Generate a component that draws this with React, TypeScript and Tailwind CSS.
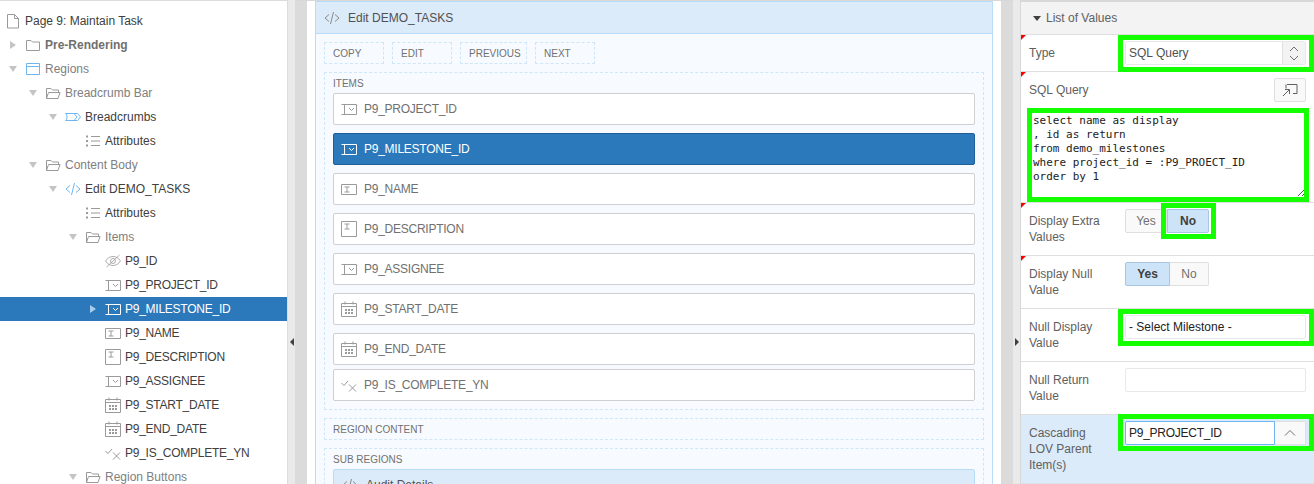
import type { ReactNode } from "react";

type IconName = "page" | "folder" | "folderOpen" | "region" | "crumb" | "list" | "code" | "hidden" | "select" | "text" | "textarea" | "date" | "check";

function Icon({ name, className = "text-[#9a9a9a]" }: { name: IconName; className?: string }) {
  const common = { fill: "none", stroke: "currentColor", strokeWidth: 1 };
  return (
    <svg width="16" height="16" viewBox="0 0 16 16" className={`shrink-0 ${className}`} {...common}>
      {name === "page" && <path d="M2.5 1.5h7l4 4v9.500h-11zM9.500 1.500v4h4" />}
      {name === "folder" && <path d="M1.500 13.500v-10h4.500l1.500 1.500h7v8.500z" />}
      {name === "folderOpen" && <path d="M1.500 13.500v-10h4.500l1.500 1.500h6v2M1.500 13.500l2-6h11.500l-2 6z" />}
      {name === "region" && <path d="M1.500 2.500h13v11h-13zM1.500 5.500h13" />}
      {name === "crumb" && <path d="M.5 4.500h8.500l3 3.500-3 3.500h-8.500c2-1.500 2-5.500 0-7zM9 4.500h3.500l3 3.500-3 3.500h-3.500" />}
      {name === "list" && (
        <>
          <path d="M6 3.500h9M6 8h9M6 12.500h9" />
          <path d="M1 3.500h2M1 8h2M1 12.500h2" strokeWidth="2" />
        </>
      )}
      {name === "code" && <path d="M5 4.500l-4 3.500 4 3.500M11 4.500l4 3.500-4 3.500M9.500 2l-3 12" />}
      {name === "hidden" && <path d="M.5 8c2-3 4.500-4.500 7.500-4.500s5.500 1.500 7.500 4.500c-2 3-4.500 4.500-7.500 4.500s-5.500-1.500-7.500-4.500zM5.500 8a2.500 2.500 0 1 0 5 0a2.500 2.500 0 1 0-5 0M1.500 14l13-12" strokeWidth=".8" />}
      {name === "select" && <path d="M.5 3.500h6M.5 13.500h6M3.500 3.500v10M5.500 3.500h10v10h-10M8 7l2.500 2.500 2.500-2.500" />}
      {name === "text" && <path d="M.5 3.500h15v10h-15zM3.500 6h5M3.500 11h5M6 6v5" />}
      {name === "textarea" && <path d="M.5 .5h15v15h-15zM3.500 3h5M3.500 8h5M6 3v5" />}
      {name === "date" && (
        <>
          <path d="M.5 2.500h15v13h-15zM.5 5.500h15M4 .5v3M12 .5v3" />
          <path d="M4 8h2v2h-2zM7 8h2v2h-2zM10 8h2v2h-2zM4 11h2v2h-2zM7 11h2v2h-2zM10 11h2v2h-2z" fill="currentColor" stroke="none" />
        </>
      )}
      {name === "check" && <path d="M.5 6l2.500 2.500 4-4.500M8 7.500l7 7M15 7.500l-7 7" />}
    </svg>
  );
}

const TREE: { label: string; level: number; icon: IconName; blue?: boolean; toggle?: "open" | "closed"; tone?: "dim" | "bold"; selected?: boolean }[] = [
  { label: "Page 9: Maintain Task", level: 0, icon: "page" },
  { label: "Pre-Rendering", level: 1, icon: "folder", toggle: "closed", tone: "bold" },
  { label: "Regions", level: 1, icon: "region", blue: true, toggle: "open", tone: "dim" },
  { label: "Breadcrumb Bar", level: 2, icon: "folderOpen", toggle: "open", tone: "dim" },
  { label: "Breadcrumbs", level: 3, icon: "crumb", blue: true, toggle: "open" },
  { label: "Attributes", level: 4, icon: "list" },
  { label: "Content Body", level: 2, icon: "folderOpen", toggle: "open", tone: "dim" },
  { label: "Edit DEMO_TASKS", level: 3, icon: "code", blue: true, toggle: "open" },
  { label: "Attributes", level: 4, icon: "list" },
  { label: "Items", level: 3.5, icon: "folderOpen", toggle: "open", tone: "dim" },
  { label: "P9_ID", level: 5, icon: "hidden" },
  { label: "P9_PROJECT_ID", level: 5, icon: "select" },
  { label: "P9_MILESTONE_ID", level: 5, icon: "select", toggle: "closed", selected: true },
  { label: "P9_NAME", level: 5, icon: "text" },
  { label: "P9_DESCRIPTION", level: 5, icon: "textarea" },
  { label: "P9_ASSIGNEE", level: 5, icon: "select" },
  { label: "P9_START_DATE", level: 5, icon: "date" },
  { label: "P9_END_DATE", level: 5, icon: "date" },
  { label: "P9_IS_COMPLETE_YN", level: 5, icon: "check" },
  { label: "Region Buttons", level: 3.5, icon: "folderOpen", toggle: "open", tone: "dim" },
];

const LEVEL_PAD: Record<number, string> = {
  0: "pl-[5px]",
  1: "pl-[25px]",
  2: "pl-[45px]",
  3: "pl-[65px]",
  3.5: "pl-[85px]",
  4: "pl-[85px]",
  5: "pl-[105px]",
};

function TreeRow({ row }: { row: (typeof TREE)[number] }) {
  const tone = row.selected ? "text-white" : row.tone === "dim" ? "text-[#808080]" : row.tone === "bold" ? "font-bold text-[#707070]" : "text-[#404040]";
  const narrow = row.label.startsWith("P9_") ? "tracking-[-.25px]" : "";
  return (
    <div className={`flex h-6 items-center gap-1 ${LEVEL_PAD[row.level]} ${row.selected ? "bg-[#2b78bb]" : ""}`}>
      {row.toggle && (
        <span className="-ml-[20px] flex w-[16px] justify-center">
          {row.toggle === "open" ? (
            <span className="border-x-[4px] border-t-[6px] border-x-transparent border-t-[#c4c4c4]" />
          ) : (
            <span className={`border-y-[4px] border-l-[6px] border-y-transparent ${row.selected ? "border-l-[#a8cdec]" : "border-l-[#c4c4c4]"}`} />
          )}
        </span>
      )}
      <Icon name={row.icon} className={row.selected ? "text-white" : row.blue ? "text-[#6db6f2]" : "text-[#9a9a9a]"} />
      <span className={`text-[12px] ${narrow} ${tone}`}>{row.label}</span>
    </div>
  );
}

const ITEMS: { label: string; icon: IconName; selected?: boolean; gap: string }[] = [
  { label: "P9_PROJECT_ID", icon: "select", gap: "mb-2" },
  { label: "P9_MILESTONE_ID", icon: "select", selected: true, gap: "mb-2" },
  { label: "P9_NAME", icon: "text", gap: "mb-2" },
  { label: "P9_DESCRIPTION", icon: "textarea", gap: "mb-2" },
  { label: "P9_ASSIGNEE", icon: "select", gap: "mb-2" },
  { label: "P9_START_DATE", icon: "date", gap: "mb-2" },
  { label: "P9_END_DATE", icon: "date", gap: "mb-1" },
  { label: "P9_IS_COMPLETE_YN", icon: "check", gap: "" },
];

function Dropzone({ label, children }: { label: string; children?: ReactNode }) {
  return (
    <div className="mx-2 mb-2 border border-dashed border-[#cfe5f8] px-2">
      <div className="flex h-[20px] items-center pt-[2px] text-[10px] leading-none text-[#707070]">{label}</div>
      {children && <div className="pb-2">{children}</div>}
    </div>
  );
}

function Corner() {
  return <span className="absolute left-0 top-0 border-b-[5px] border-l-[5px] border-b-transparent border-l-[#f00]" />;
}

// green annotation drawn over the screenshot
function Mark({ className }: { className: string }) {
  return <span className={`pointer-events-none absolute border-[5px] border-[#14ff00] ${className}`} />;
}

function PropRow({ label, corner, children, className = "" }: { label: ReactNode; corner?: boolean; children?: ReactNode; className?: string }) {
  return (
    <div className={`relative flex border-b border-[#dfdfdf] pl-2 ${className}`}>
      {corner && <Corner />}
      <div className="w-[96px] shrink-0 pt-[10px] text-[12px] leading-4 text-[#606060]">{label}</div>
      <div className="relative flex-1 pr-2 pt-[6px]">{children}</div>
    </div>
  );
}

function Toggle({ on }: { on: "Yes" | "No" }) {
  const onCls = "border-[#a8c6e2] bg-[#cde3f8] font-bold text-[#404040]";
  const offCls = "border-[#dfdfdf] bg-[#f9f9f9] text-[#707070]";
  return (
    <div className="flex h-6 w-[84px] text-[12px]">
      <span className={`flex items-center justify-center rounded-l-[2px] border ${on === "Yes" ? `w-[45px] ${onCls}` : `w-[42px] ${offCls}`}`}>Yes</span>
      <span className={`flex flex-1 items-center justify-center rounded-r-[2px] border ${on === "No" ? onCls : `border-l-0 ${offCls}`}`}>No</span>
    </div>
  );
}

export default function App() {
  return (
    <div className="flex h-[484px] w-[1314px] overflow-hidden bg-white font-['Liberation_Sans',Arial,sans-serif]">
      {/* tree */}
      <div className="w-[288px] shrink-0 overflow-hidden border-r border-t border-[#dcdcdc] pt-2">
        {TREE.map((r, i) => (
          <TreeRow key={i} row={r} />
        ))}
      </div>
      <div className="flex w-[7px] shrink-0 items-center justify-center bg-[#eaeaea] pt-[200px]">
        <span className="border-y-[4px] border-r-[4px] border-y-transparent border-r-[#404040]" />
      </div>

      {/* page layout */}
      <div className="flex flex-1 border-t border-[#d8d8d8] bg-white px-[12px]">
        <div className="flex flex-1 justify-center">
          <div className="-mx-[12px] w-[12px] shrink-0 bg-[#dbdbdb]" />
          <div className="mx-[20px] h-[600px] flex-1 border border-[#b8dcf8] bg-[#f7fbff]">
            <div className="flex h-[32px] items-center gap-2 border-b border-[#b8dcf8] bg-[#dcebf9] pl-2 pt-[1px] text-[12px] text-[#505050]">
              <Icon name="code" className="text-[#8a8a8a]" />
              Edit DEMO_TASKS
            </div>
            <div className="flex gap-2 p-2">
              {[["COPY", "w-[60px]"], ["EDIT", "w-[60px]"], ["PREVIOUS", "w-[67px]"], ["NEXT", "w-[60px]"]].map(([t, w]) => (
                <div key={t} className={`flex h-[22px] items-center border border-dashed border-[#cfe5f8] pl-2 pt-[1px] text-[10px] text-[#707070] ${w}`}>{t}</div>
              ))}
            </div>
            <Dropzone label="ITEMS">
              {ITEMS.map((it) => (
                <div key={it.label} className={`flex h-8 items-center gap-[7px] rounded-[2px] border pl-[7px] text-[12px] tracking-[-.25px] ${it.gap} ${it.selected ? "border-[#1f5f99] bg-[#2b78bb] text-white" : "border-[#cfcfcf] bg-white text-[#707070]"}`}>
                  <Icon name={it.icon} className={it.selected ? "text-white" : "text-[#9a9a9a]"} />
                  {it.label}
                </div>
              ))}
            </Dropzone>
            <Dropzone label="REGION CONTENT" />
            <Dropzone label="SUB REGIONS">
              <div className="flex h-8 items-center gap-2 rounded-[2px] border border-[#b8dcf8] bg-[#dcebf9] pl-2 text-[12px] text-[#505050]">
                <Icon name="code" className="text-[#8a8a8a]" />
                Audit Details
              </div>
            </Dropzone>
          </div>
          <div className="-mx-[12px] w-[12px] shrink-0 bg-[#dbdbdb]" />
        </div>
      </div>

      <div className="flex w-[7px] shrink-0 items-center justify-center bg-[#eaeaea] pt-[200px]">
        <span className="border-y-[4px] border-l-[4px] border-y-transparent border-l-[#404040]" />
      </div>

      {/* property editor */}
      <div className="w-[294px] shrink-0 overflow-hidden border-l border-t-2 border-[#d8d8d8]">
        <div className="flex h-[33px] items-center gap-[5px] border-b border-[#dfdfdf] bg-[#f3f3f3] pl-3 text-[12px] text-[#606060]">
          <span className="border-x-[4px] border-t-[5px] border-x-transparent border-t-[#404040]" />
          List of Values
        </div>
        <PropRow label="Type" corner className="h-[37px]">
          <div className="flex h-6 rounded-[2px] border border-[#e8e8e8] bg-white text-[12px] text-[#505050]">
            <span className="flex flex-1 items-center pl-[3px]">SQL Query</span>
            <span className="flex w-[23px] items-center justify-center border-l border-[#e0e0e0] bg-[#f3f3f3] text-[#707070]">
              <svg width="10" height="15" viewBox="0 0 10 15" fill="none" stroke="currentColor"><path d="M1 5l4-4 4 4M1 10l4 4 4-4" /></svg>
            </span>
          </div>
          <Mark className="bottom-[-1px] left-[-7px] right-0 top-0" />
        </PropRow>
        <div className="relative h-[131px] border-b border-[#dfdfdf] px-2">
          <Corner />
          <div className="flex items-center justify-between pt-[6px]">
            <span className="text-[12px] text-[#606060]">SQL Query</span>
            <span className="flex h-6 w-8 items-center justify-center rounded-[2px] border border-[#dfdfdf] bg-[#f9f9f9] text-[#606060]">
              <svg width="16" height="14" viewBox="0 0 16 14" fill="none" stroke="currentColor"><path d="M5 1.500h10v9h-4M4 1.500v4M1 13l6-6M3 6.500h4.500v4.500" /></svg>
            </span>
          </div>
          <div className="relative mt-[10px] h-[85px] whitespace-pre bg-white pl-1 pt-[2px] font-['DejaVu_Sans_Mono',monospace] text-[11px] leading-[14px] text-[#222]">
            {"select name as display\n, id as return\nfrom demo_milestones\nwhere project_id = :P9_PROECT_ID\norder by 1"}
            <svg width="7" height="7" viewBox="0 0 7 7" fill="none" stroke="#555" className="absolute bottom-[1px] right-[1px]"><path d="M0 7l7-7M4 7l3-3" /></svg>
            <Mark className="-bottom-[5px] -left-[2px] -right-[3px] -top-[4px]" />
          </div>
        </div>
        <PropRow label={<>Display Extra<br />Values</>} corner className="h-[53px]">
          <Toggle on="No" />
          <Mark className="left-[36px] top-0 h-[36px] w-[55px]" />
        </PropRow>
        <PropRow label={<>Display Null<br />Value</>} corner className="h-[53px]">
          <Toggle on="Yes" />
        </PropRow>
        <PropRow label={<>Null Display<br />Value</>} className="h-[53px]">
          <div className="flex h-6 items-center rounded-[2px] border border-[#e8e8e8] bg-white pl-[3px] text-[12px] text-[#222]">- Select Milestone -</div>
          <Mark className="left-[-7px] right-0 top-0 h-[37px]" />
        </PropRow>
        <PropRow label={<>Null Return<br />Value</>} className="h-[53px]">
          <div className="h-6 rounded-[2px] border border-[#e8e8e8] bg-white" />
        </PropRow>
        <PropRow label={<>Cascading<br />LOV Parent<br />Item(s)</>} className="-mt-[1px] h-[70px] border-y border-[#a8d0f0] bg-[#dcebf9]">
          <div className="flex h-6 text-[12px] text-[#222]">
            <span className="flex flex-1 items-center rounded-l-[2px] border border-[#6db6f2] bg-white pl-[3px] tracking-[-.25px]">P9_PROJECT_ID</span>
            <span className="flex w-[31px] items-center justify-center rounded-r-[2px] border border-l-0 border-[#e0e0e0] bg-[#f9f9f9] text-[#707070]">
              <svg width="12" height="8" viewBox="0 0 12 8" fill="none" stroke="currentColor"><path d="M1 6.500l5-5 5 5" /></svg>
            </span>
          </div>
          <Mark className="left-[-7px] right-0 top-[-1px] h-[37px]" />
        </PropRow>
      </div>
    </div>
  );
}
